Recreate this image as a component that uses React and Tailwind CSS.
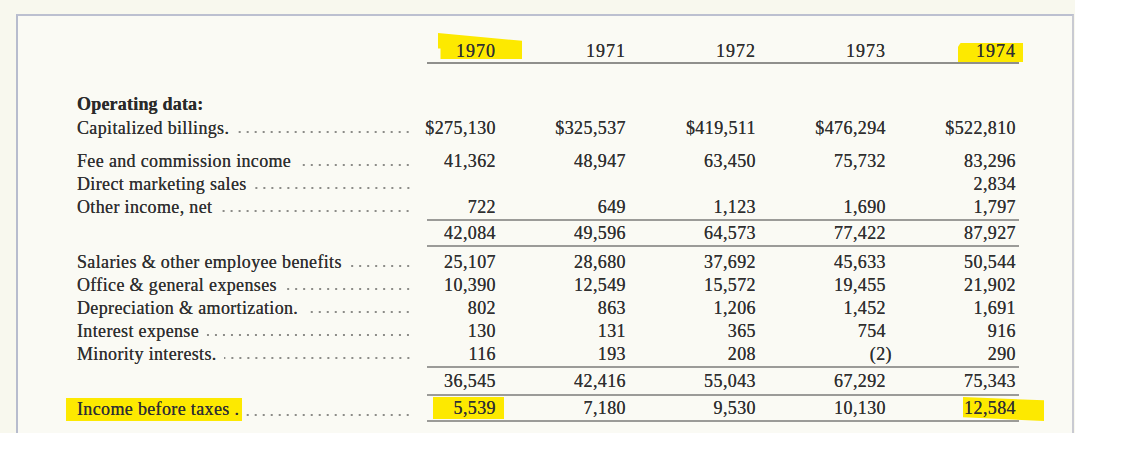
import React from "react";

const serif = { fontFamily: '"Liberation Serif", "Times New Roman", serif' };

const years = ["1970", "1971", "1972", "1973", "1974"];

function Leader() {
  return (
    <span className="ml-[7px] mb-[5px] h-[4px] min-w-0 flex-1 self-end bg-[radial-gradient(circle,#8c8c88_0.8px,transparent_1.2px)] bg-[length:8px_4px] bg-[position:right_bottom] bg-repeat-x" />
  );
}

function Label({ text, hl }) {
  return (
    <div className="flex h-full items-center pr-[15px] tracking-[0.35px]">
      {hl ? (
        <span className="relative whitespace-nowrap">
          <span className="absolute left-[-11px] right-[-3px] top-[0px] bottom-[-1px] bg-[#fde900]" />
          <span className="relative">{text}</span>
        </span>
      ) : (
        <span className="whitespace-nowrap">{text}</span>
      )}
      <Leader />
    </div>
  );
}

const GRID = "grid grid-cols-[350px_72px_130px_130px_130px_130px]";

function Row({ label, values, h, hl, top, bottom, extra = "", bold }) {
  const cellBorder =
    (top ? " border-t-2 " : "") + (bottom ? " border-b-2 " : "") + " border-[#9b9b98]";
  return (
    <div className={GRID + " " + extra} style={{ height: h }}>
      <div className={bold ? "font-bold text-[#2a2a2a]" : ""}>
        {label === null ? null : bold ? (
          <div className="flex h-full items-center tracking-[0.2px]">{label}</div>
        ) : (
          <Label text={label} hl={hl} />
        )}
      </div>
      {(values || ["", "", "", "", ""]).map((v, i) => (
        <div
          key={i}
          className={
            "relative flex items-center justify-end pr-[3px] tracking-[0.4px]" + cellBorder
          }
        >
          {hl && i === 0 ? (
            <span className="absolute left-[6px] top-[1px] h-[22px] w-[71px] bg-[#fde900]" />
          ) : null}
          {hl && i === 4 ? (
            <span className="absolute left-[74px] top-[1px] h-[24px] w-[81px] bg-[#fde900] [clip-path:polygon(0_0,100%_14%,100%_100%,0_84%)]" />
          ) : null}
          <span className="relative">
            {v === "(2)" ? (
              <>
                (2<span className="mr-[-6px]">)</span>
              </>
            ) : (
              v
            )}
          </span>
        </div>
      ))}
    </div>
  );
}

export default function App() {
  return (
    <div className="h-[472px] w-[1135px] bg-white" style={serif}>
      <div className="h-[433px] w-[1075px] bg-[#f8f8ee] pt-[14px]">
        <div className="ml-[16px] h-[419px] w-[1058px] border-l-2 border-t-2 border-r-2 border-l-[#b7bccd] border-t-[#bcc0d0] border-r-[#c9cad2] bg-[#fafaf4] pl-[59px] pt-[24px] text-[18px] leading-[22px] text-[#2f2f2f] [text-shadow:0_0_0.5px_#444]">
          {/* header */}
          <div className={GRID + " h-[24px]"}>
            <div />
            {years.map((y, i) => (
              <div
                key={y}
                className="relative flex items-end justify-end border-b-2 border-[#8f8f8c] pr-[3px] tracking-[1px]"
              >
                {i === 0 ? (
                  <span className="absolute left-[11px] top-[-7px] h-[26px] w-[84px] bg-[#fde900] [clip-path:polygon(0_0,100%_30%,100%_100%,3%_100%,3%_60%,0_60%)]" />
                ) : null}
                {i === 4 ? (
                  <span className="absolute left-[69px] top-[3px] h-[19px] w-[65px] bg-[#fde900] [clip-path:polygon(4%_0,100%_0,100%_100%,0_100%,0_20%)]" />
                ) : null}
                <span className="relative">{y}</span>
              </div>
            ))}
          </div>

          <Row label="Operating data:" bold h={23} extra="mt-[28px]" />
          <Row
            label="Capitalized billings."
            values={["$275,130", "$325,537", "$419,511", "$476,294", "$522,810"]}
            h={23}
            extra="mt-[1px]"
          />
          <Row
            label="Fee and commission income"
            values={["41,362", "48,947", "63,450", "75,732", "83,296"]}
            h={23}
            extra="mt-[10px]"
          />
          <Row label="Direct marketing sales" values={["", "", "", "", "2,834"]} h={23} />
          <Row label="Other income, net" values={["722", "649", "1,123", "1,690", "1,797"]} h={23} />
          <Row
            label={null}
            values={["42,084", "49,596", "64,573", "77,422", "87,927"]}
            h={28}
            top
            bottom
            extra="mt-[1px]"
          />
          <Row
            label="Salaries & other employee benefits"
            values={["25,107", "28,680", "37,692", "45,633", "50,544"]}
            h={23}
            extra="mt-[3px]"
          />
          <Row
            label="Office & general expenses"
            values={["10,390", "12,549", "15,572", "19,455", "21,902"]}
            h={23}
          />
          <Row
            label="Depreciation & amortization."
            values={["802", "863", "1,206", "1,452", "1,691"]}
            h={23}
          />
          <Row label="Interest expense" values={["130", "131", "365", "754", "916"]} h={23} />
          <Row label="Minority interests." values={["116", "193", "208", "(2)", "290"]} h={23} />
          <Row
            label={null}
            values={["36,545", "42,416", "55,043", "67,292", "75,343"]}
            h={30}
            top
            bottom
            extra="mt-[1px]"
          />
          <Row
            label="Income before taxes ."
            values={["5,539", "7,180", "9,530", "10,130", "12,584"]}
            h={26}
            bottom
            hl
          />
        </div>
      </div>
    </div>
  );
}
